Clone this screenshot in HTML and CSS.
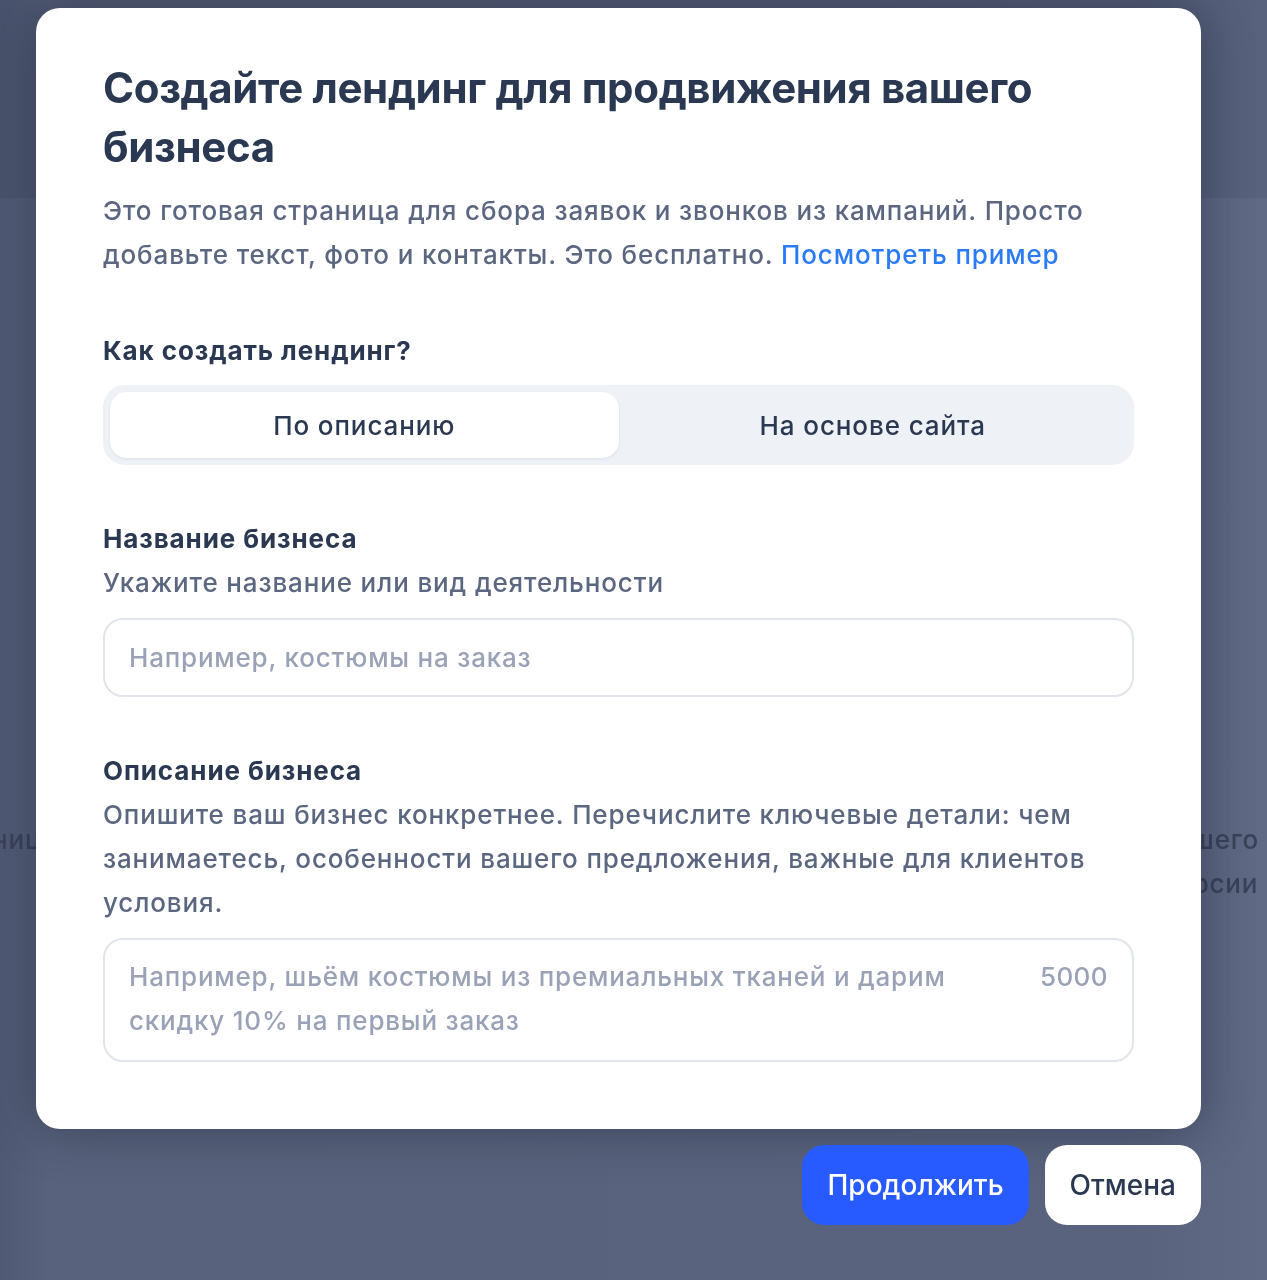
FILE: index.html
```html
<!DOCTYPE html>
<html lang="ru">
<head>
<meta charset="utf-8">
<title>Создайте лендинг</title>
<link rel="stylesheet" href="styles.css">
</head>
<body>
<div class="backdrop">
  <div class="bg-header"></div>
  <div class="bg-row">
    <div class="bg-left">ниц</div>
    <div class="bg-right">вашего<br>версии</div>
  </div>
</div>

<div class="dialog-layer">
  <div class="modal">
    <h1 class="title">Создайте лендинг для продвижения вашего бизнеса</h1>
    <p class="lead">Это готовая страница для сбора заявок и звонков из кампаний. Просто добавьте текст, фото и контакты. Это бесплатно. <a class="link" href="#">Посмотреть пример</a></p>

    <div class="label label-first">Как создать лендинг?</div>
    <div class="segmented">
      <div class="seg-item seg-active">По описанию</div>
      <div class="seg-item">На основе сайта</div>
    </div>

    <div class="label label-gap">Название бизнеса</div>
    <div class="hint">Укажите название или вид деятельности</div>
    <div class="field">
      <span class="placeholder">Например, костюмы на заказ</span>
    </div>

    <div class="label label-gap">Описание бизнеса</div>
    <div class="hint">Опишите ваш бизнес конкретнее. Перечислите ключевые детали: чем занимаетесь, особенности вашего предложения, важные для клиентов условия.</div>
    <div class="field field-area">
      <span class="placeholder area-text">Например, шьём костюмы из премиальных тканей и дарим скидку 10% на первый заказ</span>
      <span class="counter">5000</span>
    </div>
  </div>
  <div class="actions">
    <button class="btn btn-primary" type="button">Продолжить</button>
    <button class="btn btn-secondary" type="button">Отмена</button>
  </div>
</div>
</body>
</html>
```

FILE: styles.css
```css
* { box-sizing: border-box; }

html, body {
  margin: 0;
  height: 100%;
}

body {
  background: #58627c;
  font-family: Inter, "Noto Sans", sans-serif;
  color: #2a364f;
  overflow: hidden;
}

.backdrop {
  position: fixed;
  inset: 0;
  background: linear-gradient(90deg, #4f5973 0%, #58627c 4%, #59637d 90%, #606a85 100%);
}

.bg-header {
  height: 198px;
  background: rgba(20, 26, 45, 0.09);
}

.bg-row {
  display: flex;
  justify-content: space-between;
  margin-top: 620px;
  font-size: 26px;
  font-weight: 500;
  line-height: 44px;
  letter-spacing: 0.8px;
  color: #3a4259;
}

.bg-left {
  margin-left: -8px;
}

.bg-right {
  margin-right: 8px;
}

.dialog-layer {
  position: absolute;
  top: 8px;
  left: 36px;
  width: 1165px;
}

.modal {
  background: #fff;
  border-radius: 24px;
  padding: 50px 67px 67px;
  box-shadow: 0 0 50px rgba(22, 28, 48, 0.45);
}

.title {
  margin: 0;
  font-size: 42px;
  line-height: 59px;
  font-weight: 700;
  color: #2a3852;
  letter-spacing: -0.35px;
}

.lead {
  margin: 13px 0 0;
  font-size: 26px;
  font-weight: 500;
  line-height: 44px;
  letter-spacing: 0.86px;
  color: #5b6680;
}

.link {
  color: #2b7bf6;
  text-decoration: none;
}

.label {
  font-size: 26px;
  line-height: 44px;
  font-weight: 700;
  letter-spacing: 0.9px;
  color: #2a3852;
}

.label-first { margin-top: 52px; }
.label-gap { margin-top: 52px; }

.segmented {
  margin-top: 12px;
  height: 80px;
  background: #eef1f6;
  border-radius: 22px;
  padding: 7px;
  display: grid;
  grid-template-columns: 1fr 1fr;
}

.seg-item {
  display: flex;
  align-items: center;
  justify-content: center;
  font-size: 26px;
  font-weight: 500;
  letter-spacing: 0.9px;
  color: #2a3852;
  border-radius: 17px;
}

.seg-active {
  background: #fff;
  box-shadow: 0 1px 3px rgba(30, 40, 70, 0.08);
}

.hint {
  font-size: 26px;
  font-weight: 500;
  line-height: 44px;
  letter-spacing: 0.86px;
  color: #5b6680;
}

.field {
  margin-top: 13px;
  border: 2px solid #e0e4eb;
  border-radius: 20px;
  padding: 15px 24px;
  font-size: 26px;
  font-weight: 500;
  line-height: 45px;
  letter-spacing: 0.8px;
  display: flex;
  gap: 40px;
}

.field-area {
  height: 124px;
  padding-top: 15px;
  line-height: 44px;
}

.placeholder {
  color: #9aa2b7;
}

.area-text {
  flex: 1;
  max-width: 840px;
}

.counter {
  margin-left: auto;
  letter-spacing: 0.4px;
  color: #9aa2b7;
}

.actions {
  display: flex;
  justify-content: flex-end;
  gap: 16px;
  margin-top: 16px;
}

.btn {
  height: 80px;
  border: none;
  border-radius: 22px;
  padding: 0 25px;
  font-family: inherit;
  font-size: 28px;
  font-weight: 500;
  cursor: pointer;
}

.btn-primary {
  background: #285bff;
  color: #fff;
}

.btn-secondary {
  background: #fff;
  color: #2a3852;
}
```
